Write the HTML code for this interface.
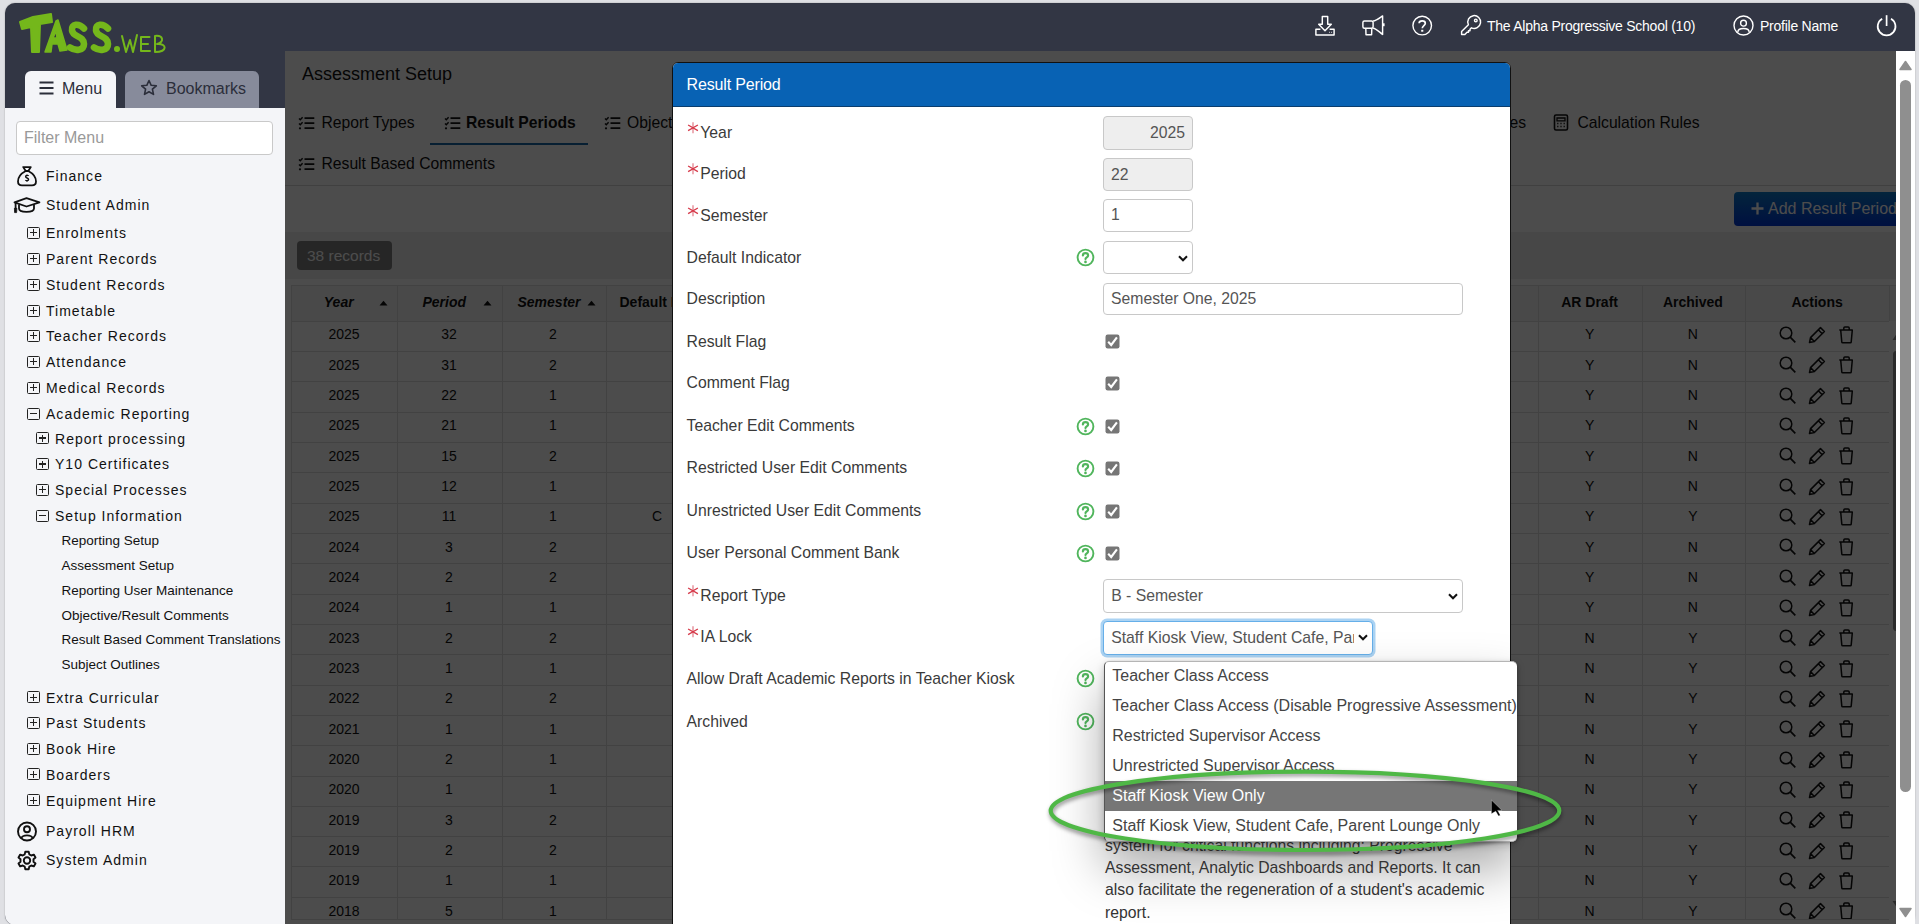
<!DOCTYPE html>
<html><head><meta charset="utf-8">
<style>
*{box-sizing:border-box;margin:0;padding:0}
html,body{width:1919px;height:924px;overflow:hidden;background:#dfe0e4;font-family:"Liberation Sans",sans-serif;position:relative}
.a{position:absolute}
.t{position:absolute;white-space:nowrap;line-height:1}
#app{position:absolute;left:5px;top:3px;width:1910px;height:922px;border-radius:10px;overflow:hidden;background:#323644;box-shadow:0 0 1.5px rgba(0,0,0,.35)}
#side{position:absolute;left:5px;top:108px;width:280px;height:816.5px;background:#f4f5f8;border-bottom-left-radius:10px}
.mi{position:absolute;white-space:nowrap;line-height:1;font-size:14px;letter-spacing:1.02px;color:#111}
.si{position:absolute;white-space:nowrap;line-height:1;font-size:13.5px;color:#111}
.bx{position:absolute;width:13px;height:12px;border:1.3px solid #222;border-radius:1.5px}
.bx:before{content:"";position:absolute;left:2px;right:2px;top:4.3px;height:1.3px;background:#222}
.bx.p:after{content:"";position:absolute;top:1.5px;bottom:1.5px;left:4.5px;width:1.3px;background:#222}
#main{position:absolute;left:285px;top:51px;width:1611px;height:880px;background:#fff;overflow:hidden}
#sb{position:absolute;left:1896px;top:51px;width:19px;height:880px;background:#fff}
.ov{position:absolute;left:0;top:0;width:1611px;height:880px;background:rgba(0,0,0,.7)}
.hd{color:#fff;font-size:14px;letter-spacing:-0.25px}
</style></head><body>
<div id="app"></div>

<!-- header logo -->
<svg class="a" style="left:0;top:0" width="200" height="60" viewBox="0 0 200 60">
 <g fill="#74b71b" stroke="#74b71b" stroke-linejoin="round" stroke-linecap="round">
  <path d="M20,22 L33,17 L51,14 L52,22 L40,24 L39,52 L32,52 L31,27 L22,29 Z" stroke-width="2"/>
  <path d="M45,52 L56,21 L58,20 L67,50 L60,51 L58,44 L52,44 L51,52 Z M53,38 L57,38 L56,31 Z" stroke-width="1.5" fill-rule="evenodd"/>
  <path d="M84,28.5 C79,23 71,23.5 72,30.5 C73,37.5 84,35.5 84,44 C84,51 75,51 70,47.5" fill="none" stroke-width="6.6"/>
  <path d="M108,28.5 C103,23 95,23.5 96,30.5 C97,37.5 108,35.5 108,44 C108,51 99,51 94,47.5" fill="none" stroke-width="6.6"/>
  <circle cx="117" cy="49" r="3" stroke="none"/>
  <path d="M122,36 L126,52 L130,40 L133,52 L137,35" fill="none" stroke-width="2"/>
  <path d="M149.5,37 L141,37 L141,51 L150,51 M141,44 L148,44" fill="none" stroke-width="2"/>
  <path d="M155,52 L155,36 C163,35 165,42 157,44 C167,43 168,52 155,52 Z" fill="none" stroke-width="2"/>
 </g>
</svg>

<!-- header right -->
<svg class="a" style="left:1313px;top:15px" width="24" height="22" viewBox="0 0 24 22" fill="none" stroke="#fff" stroke-width="1.45" stroke-linejoin="round">
 <path d="M9.3,1.4 H14.7 V9.3 H18.3 L12,15.7 L5.7,9.3 H9.3 Z"/>
 <path d="M7.4,14.2 H2.9 V20 H21.1 V14.2 H16.6"/>
 <path d="M16,17.4 h0.6 M18.2,17.4 h0.6" stroke-width="1.4"/>
</svg>
<svg class="a" style="left:1360px;top:15px" width="28" height="22" viewBox="0 0 28 22" fill="none" stroke="#fff" stroke-width="1.45" stroke-linejoin="round">
 <rect x="2.9" y="6" width="10.2" height="7.3" rx="1.5"/>
 <path d="M13.1,6 C16.5,5.6 19.5,3 22.6,0.9 V19.4 C19.5,17.3 16.5,13.7 13.1,13.3"/>
 <path d="M5.8,13.3 L6,19.8 H11.6 L11.8,13.3"/>
 <path d="M23.6,8.3 V11.2" stroke-width="2"/>
</svg>
<svg class="a" style="left:1411px;top:15px" width="22" height="22" viewBox="0 0 22 22" fill="none" stroke="#fff" stroke-width="1.4">
 <circle cx="11.2" cy="10.6" r="9.3"/>
 <path d="M8.1,8.3 C8.1,5.1 14.3,5.1 14.3,8.3 C14.3,10.5 11.3,10.7 11.3,13.3" stroke-width="1.7"/>
 <rect x="10.2" y="14.8" width="2.1" height="1.9" fill="#fff" stroke="none"/>
</svg>
<svg class="a" style="left:1459px;top:14px" width="24" height="23" viewBox="0 0 24 23" fill="none" stroke="#fff" stroke-width="1.45" stroke-linejoin="round">
 <path d="M9.4,10.7 A6.4,6.4 0 1 1 12.5,13.8 L11,15.3 V16.8 H9.5 V18.3 H8 L5.9,20.4 H2.6 V17.5 Z"/>
 <circle cx="16.8" cy="6.4" r="1.3"/>
</svg>
<div class="t hd" style="left:1487px;top:19px">The Alpha Progressive School (10)</div>
<svg class="a" style="left:1733px;top:15px" width="22" height="22" viewBox="0 0 22 22" fill="none" stroke="#fff" stroke-width="1.4">
 <circle cx="10.5" cy="10.5" r="9.5"/>
 <circle cx="10.5" cy="8.2" r="2.9"/>
 <path d="M4.8,17.2 C4.8,12.2 16.2,12.2 16.2,17.2"/>
</svg>
<div class="t hd" style="left:1760px;top:19px">Profile Name</div>
<svg class="a" style="left:1876px;top:14px" width="22" height="23" viewBox="0 0 22 23" fill="none" stroke="#fff" stroke-width="1.7">
 <path d="M10.6,1.2 V12"/>
 <path d="M6.2,4.7 A8.9,8.9 0 1 0 15,4.7"/>
</svg>

<!-- tabs -->
<div class="a" style="left:25px;top:71px;width:91px;height:40px;background:#f4f5f8;border-radius:6px 6px 0 0"></div>
<div class="a" style="left:125px;top:71px;width:134px;height:38.5px;background:#878b9b;border-radius:6px 6px 0 0"></div>
<svg class="a" style="left:39px;top:81px" width="16" height="14" viewBox="0 0 16 14"><path d="M0.5,1.5 H14.5 M0.5,7 H14.5 M0.5,12.5 H14.5" stroke="#2b2e3a" stroke-width="2"/></svg>
<div class="t" style="left:62px;top:81px;font-size:16px;color:#2b2e3a">Menu</div>
<svg class="a" style="left:140px;top:79px" width="18" height="18" viewBox="0 0 18 18"><path d="M9,1.5 L11.2,6.3 L16.3,6.8 L12.4,10.2 L13.5,15.4 L9,12.8 L4.5,15.4 L5.6,10.2 L1.7,6.8 L6.8,6.3 Z" fill="none" stroke="#2b2e3a" stroke-width="1.6" stroke-linejoin="round"/></svg>
<div class="t" style="left:166px;top:81px;font-size:16px;color:#2b2e3a">Bookmarks</div>

<!-- sidebar -->
<div id="side"></div>
<div class="a" style="left:16px;top:121px;width:257px;height:34px;background:#fff;border:1px solid #c9c9c9;border-radius:4px"></div>
<div class="t" style="left:24.0px;top:130.46px;font-size:16px;color:#999">Filter Menu</div>
<div class="mi" style="left:46px;top:169.15px">Finance</div>
<div class="mi" style="left:46px;top:198.15px">Student Admin</div>
<div class="mi" style="left:46px;top:226.15px">Enrolments</div>
<div class="bx p" style="left:27px;top:226.7px"></div>
<div class="mi" style="left:46px;top:252.15px">Parent Records</div>
<div class="bx p" style="left:27px;top:252.7px"></div>
<div class="mi" style="left:46px;top:278.15px">Student Records</div>
<div class="bx p" style="left:27px;top:278.7px"></div>
<div class="mi" style="left:46px;top:303.95px">Timetable</div>
<div class="bx p" style="left:27px;top:304.5px"></div>
<div class="mi" style="left:46px;top:329.15px">Teacher Records</div>
<div class="bx p" style="left:27px;top:329.7px"></div>
<div class="mi" style="left:46px;top:355.15px">Attendance</div>
<div class="bx p" style="left:27px;top:355.7px"></div>
<div class="mi" style="left:46px;top:381.15px">Medical Records</div>
<div class="bx p" style="left:27px;top:381.7px"></div>
<div class="mi" style="left:46px;top:407.15px">Academic Reporting</div>
<div class="bx " style="left:27px;top:407.7px"></div>
<div class="mi" style="left:55px;top:431.65px">Report processing</div>
<div class="bx p" style="left:36px;top:432.2px"></div>
<div class="mi" style="left:55px;top:457.45px">Y10 Certificates</div>
<div class="bx p" style="left:36px;top:458.0px"></div>
<div class="mi" style="left:55px;top:483.35px">Special Processes</div>
<div class="bx p" style="left:36px;top:483.9px"></div>
<div class="mi" style="left:55px;top:509.25px">Setup Information</div>
<div class="bx " style="left:36px;top:509.8px"></div>
<div class="mi" style="left:46px;top:690.85px">Extra Curricular</div>
<div class="bx p" style="left:27px;top:691.4px"></div>
<div class="mi" style="left:46px;top:716.25px">Past Students</div>
<div class="bx p" style="left:27px;top:716.8px"></div>
<div class="mi" style="left:46px;top:742.15px">Book Hire</div>
<div class="bx p" style="left:27px;top:742.7px"></div>
<div class="mi" style="left:46px;top:767.75px">Boarders</div>
<div class="bx p" style="left:27px;top:768.3px"></div>
<div class="mi" style="left:46px;top:793.75px">Equipment Hire</div>
<div class="bx p" style="left:27px;top:794.3px"></div>
<div class="mi" style="left:46px;top:824.15px">Payroll HRM</div>
<div class="mi" style="left:46px;top:853.35px">System Admin</div>
<div class="si" style="left:61.5px;top:534.47px">Reporting Setup</div>
<div class="si" style="left:61.5px;top:559.17px">Assessment Setup</div>
<div class="si" style="left:61.5px;top:584.27px">Reporting User Maintenance</div>
<div class="si" style="left:61.5px;top:608.97px">Objective/Result Comments</div>
<div class="si" style="left:61.5px;top:633.37px">Result Based Comment Translations</div>
<div class="si" style="left:61.5px;top:658.17px">Subject Outlines</div>
<svg class="a" style="left:15px;top:164px" width="24" height="24" viewBox="0 0 24 24" fill="none" stroke="#111" stroke-width="1.8" stroke-linejoin="round">
 <path d="M8.2,3.1 H15.8 L13.3,7 H10.7 Z"/>
 <path d="M10.7,7 C5,10 3,14.5 3,17.5 C3,20 4.5,21.3 7,21.3 H17 C19.5,21.3 21,20 21,17.5 C21,14.5 19,10 13.3,7"/>
 <path d="M13.6,11.9 C13.1,11.2 10.6,11.1 10.6,12.7 C10.6,14.2 13.6,13.8 13.6,15.4 C13.6,16.9 11,16.9 10.4,16.1 M12,10.6 V11.4 M12,16.9 V17.8" stroke-width="1.4"/>
</svg>
<svg class="a" style="left:13px;top:195px" width="28" height="20" viewBox="0 0 28 20" fill="none" stroke="#111" stroke-width="1.8" stroke-linejoin="round">
 <path d="M13.5,3.2 L26.5,7.3 L13.5,11.5 L1.5,7.3 Z"/>
 <path d="M6,9.4 V13.5 C6,18 21,18 21,13.5 V9.4"/>
 <path d="M2.6,7.6 V14"/>
 <path d="M1.4,13.3 L3.9,13.3 L3.6,17.6 H1.6 Z" fill="#111" stroke-width="0.8"/>
</svg>
<svg class="a" style="left:16px;top:821px" width="22" height="22" viewBox="0 0 22 22" fill="none" stroke="#111" stroke-width="1.9">
 <circle cx="11" cy="10.5" r="9"/>
 <circle cx="11" cy="8.3" r="3"/>
 <path d="M5.3,17.2 C6.5,13.4 15.5,13.4 16.7,17.2"/>
</svg>
<svg class="a" style="left:16px;top:850px" width="22" height="22" viewBox="0 0 22 22" fill="none" stroke="#111" stroke-width="1.9" stroke-linejoin="round">
 <path d="M9.3,1.8 H12.7 L13.3,4.4 L15.3,5.5 L17.8,4.6 L19.5,7.5 L17.5,9.3 V11.7 L19.5,13.5 L17.8,16.4 L15.3,15.5 L13.3,16.6 L12.7,19.2 H9.3 L8.7,16.6 L6.7,15.5 L4.2,16.4 L2.5,13.5 L4.5,11.7 V9.3 L2.5,7.5 L4.2,4.6 L6.7,5.5 L8.7,4.4 Z"/>
 <circle cx="11" cy="10.5" r="3.2"/>
</svg>
<div id="main">
<div class="t" style="left:17.0px;top:13.76px;font-size:18px;color:#111">Assessment Setup</div>
<svg class="a" style="left:13px;top:65px" width="17" height="14" viewBox="0 0 17 14" fill="none" stroke="#111" stroke-width="1.7">
<path d="M1,2.5 L2.3,3.8 L4.6,1.2 M1,7.5 L2.3,8.8 L4.6,6.2" stroke-width="1.4"/><circle cx="2" cy="12.3" r="1.1" fill="#111" stroke="none"/>
<path d="M6.5,2.2 H16.3 M6.5,7.2 H16.3 M6.5,12.2 H16.3"/></svg>
<div class="t" style="left:36.5px;top:64.11px;font-size:15.7px;color:#111">Report Types</div>
<svg class="a" style="left:158.5px;top:65px" width="17" height="14" viewBox="0 0 17 14" fill="none" stroke="#111" stroke-width="1.7">
<path d="M1,2.5 L2.3,3.8 L4.6,1.2 M1,7.5 L2.3,8.8 L4.6,6.2" stroke-width="1.4"/><circle cx="2" cy="12.3" r="1.1" fill="#111" stroke="none"/>
<path d="M6.5,2.2 H16.3 M6.5,7.2 H16.3 M6.5,12.2 H16.3"/></svg>
<div class="t" style="left:181.0px;top:64.11px;font-size:15.7px;color:#111;font-weight:bold">Result Periods</div>
<div class="a" style="left:145.0px;top:91.5px;width:158.0px;height:2.5px;background:#1a6aa8"></div>
<svg class="a" style="left:319px;top:65px" width="17" height="14" viewBox="0 0 17 14" fill="none" stroke="#111" stroke-width="1.7">
<path d="M1,2.5 L2.3,3.8 L4.6,1.2 M1,7.5 L2.3,8.8 L4.6,6.2" stroke-width="1.4"/><circle cx="2" cy="12.3" r="1.1" fill="#111" stroke="none"/>
<path d="M6.5,2.2 H16.3 M6.5,7.2 H16.3 M6.5,12.2 H16.3"/></svg>
<div class="t" style="left:342.0px;top:64.11px;font-size:15.7px;color:#111">Objective/Result Comment Templates</div>
<svg class="a" style="left:13px;top:106px" width="17" height="14" viewBox="0 0 17 14" fill="none" stroke="#111" stroke-width="1.7">
<path d="M1,2.5 L2.3,3.8 L4.6,1.2 M1,7.5 L2.3,8.8 L4.6,6.2" stroke-width="1.4"/><circle cx="2" cy="12.3" r="1.1" fill="#111" stroke="none"/>
<path d="M6.5,2.2 H16.3 M6.5,7.2 H16.3 M6.5,12.2 H16.3"/></svg>
<div class="t" style="left:36.5px;top:105.41px;font-size:15.7px;color:#111">Result Based Comments</div>
<div class="t" style="left:1040px;width:201px;text-align:right;top:64.11px;font-size:15.7px;color:#111">Comment Templates</div>
<svg class="a" style="left:1268px;top:63px" width="16" height="17" viewBox="0 0 16 17" fill="none" stroke="#111" stroke-width="1.6">
<rect x="1.5" y="1" width="13" height="15" rx="1.5"/><path d="M4,4 H12 V6.8 H4 Z" stroke-width="1.3"/>
<path d="M4.2,9.5 h1.2 M7.4,9.5 h1.2 M10.6,9.5 h1.2 M4.2,12.5 h1.2 M7.4,12.5 h1.2 M10.6,12.5 h1.2" stroke-width="1.5"/></svg>
<div class="t" style="left:1292.5px;top:64.11px;font-size:15.7px;color:#111">Calculation Rules</div>
<div class="a" style="left:0.0px;top:134.0px;width:1611.0px;height:1.0px;background:#d5d5d5"></div>
<div class="a" style="left:1449.0px;top:141.0px;width:200.0px;height:34.0px;border-radius:4px;background:linear-gradient(#0c7bc9,#0036d6)"></div>
<svg class="a" style="left:1465.5px;top:150.5px" width="13" height="13" viewBox="0 0 13 13"><path d="M6.5,0.5 V12.5 M0.5,6.5 H12.5" stroke="#fff" stroke-width="2.3"/></svg>
<div class="t" style="left:1483.0px;top:149.66px;font-size:16px;color:#fff">Add Result Period</div>
<div class="a" style="left:0.0px;top:181.0px;width:1611.0px;height:46.5px;background:#ededed"></div>
<div class="a" style="left:12.0px;top:190.0px;width:95.0px;height:28.5px;border-radius:4px;background:#7f7f7f"></div>
<div class="t" style="left:22.0px;top:196.68px;font-size:15.5px;color:#fff">38 records</div>
<div class="a" style="left:6.4px;top:234.0px;width:1604.6px;height:35.5px;background:#f6f6f6"></div>
<div class="a" style="left:6.4px;top:234.0px;width:1.0px;height:642.1px;background:#dedede"></div>
<div class="a" style="left:111.5px;top:234.0px;width:1.0px;height:642.1px;background:#dedede"></div>
<div class="a" style="left:216.6px;top:234.0px;width:1.0px;height:642.1px;background:#dedede"></div>
<div class="a" style="left:320.5px;top:234.0px;width:1.0px;height:642.1px;background:#dedede"></div>
<div class="a" style="left:424.5px;top:234.0px;width:1.0px;height:642.1px;background:#dedede"></div>
<div class="a" style="left:528.0px;top:234.0px;width:1.0px;height:642.1px;background:#dedede"></div>
<div class="a" style="left:632.0px;top:234.0px;width:1.0px;height:642.1px;background:#dedede"></div>
<div class="a" style="left:736.0px;top:234.0px;width:1.0px;height:642.1px;background:#dedede"></div>
<div class="a" style="left:840.0px;top:234.0px;width:1.0px;height:642.1px;background:#dedede"></div>
<div class="a" style="left:944.0px;top:234.0px;width:1.0px;height:642.1px;background:#dedede"></div>
<div class="a" style="left:1048.0px;top:234.0px;width:1.0px;height:642.1px;background:#dedede"></div>
<div class="a" style="left:1152.0px;top:234.0px;width:1.0px;height:642.1px;background:#dedede"></div>
<div class="a" style="left:1252.9px;top:234.0px;width:1.0px;height:642.1px;background:#dedede"></div>
<div class="a" style="left:1356.5px;top:234.0px;width:1.0px;height:642.1px;background:#dedede"></div>
<div class="a" style="left:1459.6px;top:234.0px;width:1.0px;height:642.1px;background:#dedede"></div>
<div class="a" style="left:1604.2px;top:234.0px;width:1.0px;height:35.5px;background:#dedede"></div>
<div class="a" style="left:6.4px;top:234.0px;width:1604.6px;height:1.0px;background:#dedede"></div>
<div class="a" style="left:6.4px;top:269.5px;width:1597.8px;height:1.0px;background:#dedede"></div>
<div class="a" style="left:6.4px;top:299.8px;width:1597.8px;height:1.0px;background:#dedede"></div>
<div class="a" style="left:6.4px;top:330.2px;width:1597.8px;height:1.0px;background:#dedede"></div>
<div class="a" style="left:6.4px;top:360.5px;width:1597.8px;height:1.0px;background:#dedede"></div>
<div class="a" style="left:6.4px;top:390.8px;width:1597.8px;height:1.0px;background:#dedede"></div>
<div class="a" style="left:6.4px;top:421.1px;width:1597.8px;height:1.0px;background:#dedede"></div>
<div class="a" style="left:6.4px;top:451.5px;width:1597.8px;height:1.0px;background:#dedede"></div>
<div class="a" style="left:6.4px;top:481.8px;width:1597.8px;height:1.0px;background:#dedede"></div>
<div class="a" style="left:6.4px;top:512.1px;width:1597.8px;height:1.0px;background:#dedede"></div>
<div class="a" style="left:6.4px;top:542.5px;width:1597.8px;height:1.0px;background:#dedede"></div>
<div class="a" style="left:6.4px;top:572.8px;width:1597.8px;height:1.0px;background:#dedede"></div>
<div class="a" style="left:6.4px;top:603.1px;width:1597.8px;height:1.0px;background:#dedede"></div>
<div class="a" style="left:6.4px;top:633.5px;width:1597.8px;height:1.0px;background:#dedede"></div>
<div class="a" style="left:6.4px;top:663.8px;width:1597.8px;height:1.0px;background:#dedede"></div>
<div class="a" style="left:6.4px;top:694.1px;width:1597.8px;height:1.0px;background:#dedede"></div>
<div class="a" style="left:6.4px;top:724.5px;width:1597.8px;height:1.0px;background:#dedede"></div>
<div class="a" style="left:6.4px;top:754.8px;width:1597.8px;height:1.0px;background:#dedede"></div>
<div class="a" style="left:6.4px;top:785.1px;width:1597.8px;height:1.0px;background:#dedede"></div>
<div class="a" style="left:6.4px;top:815.4px;width:1597.8px;height:1.0px;background:#dedede"></div>
<div class="a" style="left:6.4px;top:845.8px;width:1597.8px;height:1.0px;background:#dedede"></div>
<div class="a" style="left:6.4px;top:876.1px;width:1597.8px;height:1.0px;background:#dedede"></div>
<div class="t" style="left:38.8px;top:244.45px;font-size:14px;color:#111;font-weight:bold;font-style:italic">Year</div>
<div class="t" style="left:137.5px;top:244.45px;font-size:14px;color:#111;font-weight:bold;font-style:italic">Period</div>
<div class="t" style="left:232.5px;top:244.45px;font-size:14px;color:#111;font-weight:bold;font-style:italic">Semester</div>
<div class="t" style="left:334.5px;top:244.45px;font-size:14px;color:#111;font-weight:bold">Default Indicator</div>
<svg class="a" style="left:93.5px;top:249px" width="9" height="6" viewBox="0 0 9 6"><path d="M0.5,5.5 L4.5,0.8 L8.5,5.5 Z" fill="#111"/></svg>
<svg class="a" style="left:198.39999999999998px;top:249px" width="9" height="6" viewBox="0 0 9 6"><path d="M0.5,5.5 L4.5,0.8 L8.5,5.5 Z" fill="#111"/></svg>
<svg class="a" style="left:302px;top:249px" width="9" height="6" viewBox="0 0 9 6"><path d="M0.5,5.5 L4.5,0.8 L8.5,5.5 Z" fill="#111"/></svg>
<div class="t" style="left:1204.6px;width:200px;text-align:center;top:244.45px;font-size:14px;color:#111;font-weight:bold">AR Draft</div>
<div class="t" style="left:1307.9px;width:200px;text-align:center;top:244.45px;font-size:14px;color:#111;font-weight:bold">Archived</div>
<div class="t" style="left:1432.1px;width:200px;text-align:center;top:244.45px;font-size:14px;color:#111;font-weight:bold">Actions</div>
<div class="t" style="left:-41.0px;width:200px;text-align:center;top:276.35px;font-size:14px;color:#111">2025</div>
<div class="t" style="left:64.0px;width:200px;text-align:center;top:276.35px;font-size:14px;color:#111">32</div>
<div class="t" style="left:168.0px;width:200px;text-align:center;top:276.35px;font-size:14px;color:#111">2</div>
<div class="t" style="left:1204.6px;width:200px;text-align:center;top:276.35px;font-size:14px;color:#111">Y</div>
<div class="t" style="left:1307.9px;width:200px;text-align:center;top:276.35px;font-size:14px;color:#111">N</div>
<svg class="a" style="left:1494.0px;top:275.0px" width="80" height="18" viewBox="0 0 80 18" fill="none" stroke="#111" stroke-width="1.5">
<circle cx="7" cy="7" r="5.8"/><path d="M11.2,11.2 L16.3,16.3" stroke-width="1.7"/>
<path d="M30.5,16.5 L31.5,11.6 L41.5,1.6 L45.4,5.5 L35.4,15.5 Z M39.3,3.8 L43.2,7.7 M31.5,11.6 L35.4,15.5" stroke-linejoin="round"/>
<path d="M60.3,4 H73.8 M61.7,4 L62.8,16.1 Q62.9,16.8 63.6,16.8 H71.4 Q72.1,16.8 72.2,16.1 L73.3,4 M64.8,4 V2.1 Q64.8,1 65.9,1 H69.1 Q70.2,1 70.2,2.1 V4" stroke-linejoin="round"/>
</svg>
<div class="t" style="left:-41.0px;width:200px;text-align:center;top:306.68px;font-size:14px;color:#111">2025</div>
<div class="t" style="left:64.0px;width:200px;text-align:center;top:306.68px;font-size:14px;color:#111">31</div>
<div class="t" style="left:168.0px;width:200px;text-align:center;top:306.68px;font-size:14px;color:#111">2</div>
<div class="t" style="left:1204.6px;width:200px;text-align:center;top:306.68px;font-size:14px;color:#111">Y</div>
<div class="t" style="left:1307.9px;width:200px;text-align:center;top:306.68px;font-size:14px;color:#111">N</div>
<svg class="a" style="left:1494.0px;top:305.3px" width="80" height="18" viewBox="0 0 80 18" fill="none" stroke="#111" stroke-width="1.5">
<circle cx="7" cy="7" r="5.8"/><path d="M11.2,11.2 L16.3,16.3" stroke-width="1.7"/>
<path d="M30.5,16.5 L31.5,11.6 L41.5,1.6 L45.4,5.5 L35.4,15.5 Z M39.3,3.8 L43.2,7.7 M31.5,11.6 L35.4,15.5" stroke-linejoin="round"/>
<path d="M60.3,4 H73.8 M61.7,4 L62.8,16.1 Q62.9,16.8 63.6,16.8 H71.4 Q72.1,16.8 72.2,16.1 L73.3,4 M64.8,4 V2.1 Q64.8,1 65.9,1 H69.1 Q70.2,1 70.2,2.1 V4" stroke-linejoin="round"/>
</svg>
<div class="t" style="left:-41.0px;width:200px;text-align:center;top:337.01px;font-size:14px;color:#111">2025</div>
<div class="t" style="left:64.0px;width:200px;text-align:center;top:337.01px;font-size:14px;color:#111">22</div>
<div class="t" style="left:168.0px;width:200px;text-align:center;top:337.01px;font-size:14px;color:#111">1</div>
<div class="t" style="left:1204.6px;width:200px;text-align:center;top:337.01px;font-size:14px;color:#111">Y</div>
<div class="t" style="left:1307.9px;width:200px;text-align:center;top:337.01px;font-size:14px;color:#111">N</div>
<svg class="a" style="left:1494.0px;top:335.7px" width="80" height="18" viewBox="0 0 80 18" fill="none" stroke="#111" stroke-width="1.5">
<circle cx="7" cy="7" r="5.8"/><path d="M11.2,11.2 L16.3,16.3" stroke-width="1.7"/>
<path d="M30.5,16.5 L31.5,11.6 L41.5,1.6 L45.4,5.5 L35.4,15.5 Z M39.3,3.8 L43.2,7.7 M31.5,11.6 L35.4,15.5" stroke-linejoin="round"/>
<path d="M60.3,4 H73.8 M61.7,4 L62.8,16.1 Q62.9,16.8 63.6,16.8 H71.4 Q72.1,16.8 72.2,16.1 L73.3,4 M64.8,4 V2.1 Q64.8,1 65.9,1 H69.1 Q70.2,1 70.2,2.1 V4" stroke-linejoin="round"/>
</svg>
<div class="t" style="left:-41.0px;width:200px;text-align:center;top:367.34px;font-size:14px;color:#111">2025</div>
<div class="t" style="left:64.0px;width:200px;text-align:center;top:367.34px;font-size:14px;color:#111">21</div>
<div class="t" style="left:168.0px;width:200px;text-align:center;top:367.34px;font-size:14px;color:#111">1</div>
<div class="t" style="left:1204.6px;width:200px;text-align:center;top:367.34px;font-size:14px;color:#111">Y</div>
<div class="t" style="left:1307.9px;width:200px;text-align:center;top:367.34px;font-size:14px;color:#111">N</div>
<svg class="a" style="left:1494.0px;top:366.0px" width="80" height="18" viewBox="0 0 80 18" fill="none" stroke="#111" stroke-width="1.5">
<circle cx="7" cy="7" r="5.8"/><path d="M11.2,11.2 L16.3,16.3" stroke-width="1.7"/>
<path d="M30.5,16.5 L31.5,11.6 L41.5,1.6 L45.4,5.5 L35.4,15.5 Z M39.3,3.8 L43.2,7.7 M31.5,11.6 L35.4,15.5" stroke-linejoin="round"/>
<path d="M60.3,4 H73.8 M61.7,4 L62.8,16.1 Q62.9,16.8 63.6,16.8 H71.4 Q72.1,16.8 72.2,16.1 L73.3,4 M64.8,4 V2.1 Q64.8,1 65.9,1 H69.1 Q70.2,1 70.2,2.1 V4" stroke-linejoin="round"/>
</svg>
<div class="t" style="left:-41.0px;width:200px;text-align:center;top:397.67px;font-size:14px;color:#111">2025</div>
<div class="t" style="left:64.0px;width:200px;text-align:center;top:397.67px;font-size:14px;color:#111">15</div>
<div class="t" style="left:168.0px;width:200px;text-align:center;top:397.67px;font-size:14px;color:#111">2</div>
<div class="t" style="left:1204.6px;width:200px;text-align:center;top:397.67px;font-size:14px;color:#111">Y</div>
<div class="t" style="left:1307.9px;width:200px;text-align:center;top:397.67px;font-size:14px;color:#111">N</div>
<svg class="a" style="left:1494.0px;top:396.3px" width="80" height="18" viewBox="0 0 80 18" fill="none" stroke="#111" stroke-width="1.5">
<circle cx="7" cy="7" r="5.8"/><path d="M11.2,11.2 L16.3,16.3" stroke-width="1.7"/>
<path d="M30.5,16.5 L31.5,11.6 L41.5,1.6 L45.4,5.5 L35.4,15.5 Z M39.3,3.8 L43.2,7.7 M31.5,11.6 L35.4,15.5" stroke-linejoin="round"/>
<path d="M60.3,4 H73.8 M61.7,4 L62.8,16.1 Q62.9,16.8 63.6,16.8 H71.4 Q72.1,16.8 72.2,16.1 L73.3,4 M64.8,4 V2.1 Q64.8,1 65.9,1 H69.1 Q70.2,1 70.2,2.1 V4" stroke-linejoin="round"/>
</svg>
<div class="t" style="left:-41.0px;width:200px;text-align:center;top:428.00px;font-size:14px;color:#111">2025</div>
<div class="t" style="left:64.0px;width:200px;text-align:center;top:428.00px;font-size:14px;color:#111">12</div>
<div class="t" style="left:168.0px;width:200px;text-align:center;top:428.00px;font-size:14px;color:#111">1</div>
<div class="t" style="left:1204.6px;width:200px;text-align:center;top:428.00px;font-size:14px;color:#111">Y</div>
<div class="t" style="left:1307.9px;width:200px;text-align:center;top:428.00px;font-size:14px;color:#111">N</div>
<svg class="a" style="left:1494.0px;top:426.6px" width="80" height="18" viewBox="0 0 80 18" fill="none" stroke="#111" stroke-width="1.5">
<circle cx="7" cy="7" r="5.8"/><path d="M11.2,11.2 L16.3,16.3" stroke-width="1.7"/>
<path d="M30.5,16.5 L31.5,11.6 L41.5,1.6 L45.4,5.5 L35.4,15.5 Z M39.3,3.8 L43.2,7.7 M31.5,11.6 L35.4,15.5" stroke-linejoin="round"/>
<path d="M60.3,4 H73.8 M61.7,4 L62.8,16.1 Q62.9,16.8 63.6,16.8 H71.4 Q72.1,16.8 72.2,16.1 L73.3,4 M64.8,4 V2.1 Q64.8,1 65.9,1 H69.1 Q70.2,1 70.2,2.1 V4" stroke-linejoin="round"/>
</svg>
<div class="t" style="left:-41.0px;width:200px;text-align:center;top:458.33px;font-size:14px;color:#111">2025</div>
<div class="t" style="left:64.0px;width:200px;text-align:center;top:458.33px;font-size:14px;color:#111">11</div>
<div class="t" style="left:168.0px;width:200px;text-align:center;top:458.33px;font-size:14px;color:#111">1</div>
<div class="t" style="left:272.0px;width:200px;text-align:center;top:458.33px;font-size:14px;color:#111">C</div>
<div class="t" style="left:1204.6px;width:200px;text-align:center;top:458.33px;font-size:14px;color:#111">Y</div>
<div class="t" style="left:1307.9px;width:200px;text-align:center;top:458.33px;font-size:14px;color:#111">Y</div>
<svg class="a" style="left:1494.0px;top:457.0px" width="80" height="18" viewBox="0 0 80 18" fill="none" stroke="#111" stroke-width="1.5">
<circle cx="7" cy="7" r="5.8"/><path d="M11.2,11.2 L16.3,16.3" stroke-width="1.7"/>
<path d="M30.5,16.5 L31.5,11.6 L41.5,1.6 L45.4,5.5 L35.4,15.5 Z M39.3,3.8 L43.2,7.7 M31.5,11.6 L35.4,15.5" stroke-linejoin="round"/>
<path d="M60.3,4 H73.8 M61.7,4 L62.8,16.1 Q62.9,16.8 63.6,16.8 H71.4 Q72.1,16.8 72.2,16.1 L73.3,4 M64.8,4 V2.1 Q64.8,1 65.9,1 H69.1 Q70.2,1 70.2,2.1 V4" stroke-linejoin="round"/>
</svg>
<div class="t" style="left:-41.0px;width:200px;text-align:center;top:488.66px;font-size:14px;color:#111">2024</div>
<div class="t" style="left:64.0px;width:200px;text-align:center;top:488.66px;font-size:14px;color:#111">3</div>
<div class="t" style="left:168.0px;width:200px;text-align:center;top:488.66px;font-size:14px;color:#111">2</div>
<div class="t" style="left:1204.6px;width:200px;text-align:center;top:488.66px;font-size:14px;color:#111">Y</div>
<div class="t" style="left:1307.9px;width:200px;text-align:center;top:488.66px;font-size:14px;color:#111">N</div>
<svg class="a" style="left:1494.0px;top:487.3px" width="80" height="18" viewBox="0 0 80 18" fill="none" stroke="#111" stroke-width="1.5">
<circle cx="7" cy="7" r="5.8"/><path d="M11.2,11.2 L16.3,16.3" stroke-width="1.7"/>
<path d="M30.5,16.5 L31.5,11.6 L41.5,1.6 L45.4,5.5 L35.4,15.5 Z M39.3,3.8 L43.2,7.7 M31.5,11.6 L35.4,15.5" stroke-linejoin="round"/>
<path d="M60.3,4 H73.8 M61.7,4 L62.8,16.1 Q62.9,16.8 63.6,16.8 H71.4 Q72.1,16.8 72.2,16.1 L73.3,4 M64.8,4 V2.1 Q64.8,1 65.9,1 H69.1 Q70.2,1 70.2,2.1 V4" stroke-linejoin="round"/>
</svg>
<div class="t" style="left:-41.0px;width:200px;text-align:center;top:518.99px;font-size:14px;color:#111">2024</div>
<div class="t" style="left:64.0px;width:200px;text-align:center;top:518.99px;font-size:14px;color:#111">2</div>
<div class="t" style="left:168.0px;width:200px;text-align:center;top:518.99px;font-size:14px;color:#111">2</div>
<div class="t" style="left:1204.6px;width:200px;text-align:center;top:518.99px;font-size:14px;color:#111">Y</div>
<div class="t" style="left:1307.9px;width:200px;text-align:center;top:518.99px;font-size:14px;color:#111">N</div>
<svg class="a" style="left:1494.0px;top:517.6px" width="80" height="18" viewBox="0 0 80 18" fill="none" stroke="#111" stroke-width="1.5">
<circle cx="7" cy="7" r="5.8"/><path d="M11.2,11.2 L16.3,16.3" stroke-width="1.7"/>
<path d="M30.5,16.5 L31.5,11.6 L41.5,1.6 L45.4,5.5 L35.4,15.5 Z M39.3,3.8 L43.2,7.7 M31.5,11.6 L35.4,15.5" stroke-linejoin="round"/>
<path d="M60.3,4 H73.8 M61.7,4 L62.8,16.1 Q62.9,16.8 63.6,16.8 H71.4 Q72.1,16.8 72.2,16.1 L73.3,4 M64.8,4 V2.1 Q64.8,1 65.9,1 H69.1 Q70.2,1 70.2,2.1 V4" stroke-linejoin="round"/>
</svg>
<div class="t" style="left:-41.0px;width:200px;text-align:center;top:549.32px;font-size:14px;color:#111">2024</div>
<div class="t" style="left:64.0px;width:200px;text-align:center;top:549.32px;font-size:14px;color:#111">1</div>
<div class="t" style="left:168.0px;width:200px;text-align:center;top:549.32px;font-size:14px;color:#111">1</div>
<div class="t" style="left:1204.6px;width:200px;text-align:center;top:549.32px;font-size:14px;color:#111">Y</div>
<div class="t" style="left:1307.9px;width:200px;text-align:center;top:549.32px;font-size:14px;color:#111">N</div>
<svg class="a" style="left:1494.0px;top:548.0px" width="80" height="18" viewBox="0 0 80 18" fill="none" stroke="#111" stroke-width="1.5">
<circle cx="7" cy="7" r="5.8"/><path d="M11.2,11.2 L16.3,16.3" stroke-width="1.7"/>
<path d="M30.5,16.5 L31.5,11.6 L41.5,1.6 L45.4,5.5 L35.4,15.5 Z M39.3,3.8 L43.2,7.7 M31.5,11.6 L35.4,15.5" stroke-linejoin="round"/>
<path d="M60.3,4 H73.8 M61.7,4 L62.8,16.1 Q62.9,16.8 63.6,16.8 H71.4 Q72.1,16.8 72.2,16.1 L73.3,4 M64.8,4 V2.1 Q64.8,1 65.9,1 H69.1 Q70.2,1 70.2,2.1 V4" stroke-linejoin="round"/>
</svg>
<div class="t" style="left:-41.0px;width:200px;text-align:center;top:579.65px;font-size:14px;color:#111">2023</div>
<div class="t" style="left:64.0px;width:200px;text-align:center;top:579.65px;font-size:14px;color:#111">2</div>
<div class="t" style="left:168.0px;width:200px;text-align:center;top:579.65px;font-size:14px;color:#111">2</div>
<div class="t" style="left:1204.6px;width:200px;text-align:center;top:579.65px;font-size:14px;color:#111">N</div>
<div class="t" style="left:1307.9px;width:200px;text-align:center;top:579.65px;font-size:14px;color:#111">Y</div>
<svg class="a" style="left:1494.0px;top:578.3px" width="80" height="18" viewBox="0 0 80 18" fill="none" stroke="#111" stroke-width="1.5">
<circle cx="7" cy="7" r="5.8"/><path d="M11.2,11.2 L16.3,16.3" stroke-width="1.7"/>
<path d="M30.5,16.5 L31.5,11.6 L41.5,1.6 L45.4,5.5 L35.4,15.5 Z M39.3,3.8 L43.2,7.7 M31.5,11.6 L35.4,15.5" stroke-linejoin="round"/>
<path d="M60.3,4 H73.8 M61.7,4 L62.8,16.1 Q62.9,16.8 63.6,16.8 H71.4 Q72.1,16.8 72.2,16.1 L73.3,4 M64.8,4 V2.1 Q64.8,1 65.9,1 H69.1 Q70.2,1 70.2,2.1 V4" stroke-linejoin="round"/>
</svg>
<div class="t" style="left:-41.0px;width:200px;text-align:center;top:609.98px;font-size:14px;color:#111">2023</div>
<div class="t" style="left:64.0px;width:200px;text-align:center;top:609.98px;font-size:14px;color:#111">1</div>
<div class="t" style="left:168.0px;width:200px;text-align:center;top:609.98px;font-size:14px;color:#111">1</div>
<div class="t" style="left:1204.6px;width:200px;text-align:center;top:609.98px;font-size:14px;color:#111">N</div>
<div class="t" style="left:1307.9px;width:200px;text-align:center;top:609.98px;font-size:14px;color:#111">Y</div>
<svg class="a" style="left:1494.0px;top:608.6px" width="80" height="18" viewBox="0 0 80 18" fill="none" stroke="#111" stroke-width="1.5">
<circle cx="7" cy="7" r="5.8"/><path d="M11.2,11.2 L16.3,16.3" stroke-width="1.7"/>
<path d="M30.5,16.5 L31.5,11.6 L41.5,1.6 L45.4,5.5 L35.4,15.5 Z M39.3,3.8 L43.2,7.7 M31.5,11.6 L35.4,15.5" stroke-linejoin="round"/>
<path d="M60.3,4 H73.8 M61.7,4 L62.8,16.1 Q62.9,16.8 63.6,16.8 H71.4 Q72.1,16.8 72.2,16.1 L73.3,4 M64.8,4 V2.1 Q64.8,1 65.9,1 H69.1 Q70.2,1 70.2,2.1 V4" stroke-linejoin="round"/>
</svg>
<div class="t" style="left:-41.0px;width:200px;text-align:center;top:640.31px;font-size:14px;color:#111">2022</div>
<div class="t" style="left:64.0px;width:200px;text-align:center;top:640.31px;font-size:14px;color:#111">2</div>
<div class="t" style="left:168.0px;width:200px;text-align:center;top:640.31px;font-size:14px;color:#111">2</div>
<div class="t" style="left:1204.6px;width:200px;text-align:center;top:640.31px;font-size:14px;color:#111">N</div>
<div class="t" style="left:1307.9px;width:200px;text-align:center;top:640.31px;font-size:14px;color:#111">Y</div>
<svg class="a" style="left:1494.0px;top:639.0px" width="80" height="18" viewBox="0 0 80 18" fill="none" stroke="#111" stroke-width="1.5">
<circle cx="7" cy="7" r="5.8"/><path d="M11.2,11.2 L16.3,16.3" stroke-width="1.7"/>
<path d="M30.5,16.5 L31.5,11.6 L41.5,1.6 L45.4,5.5 L35.4,15.5 Z M39.3,3.8 L43.2,7.7 M31.5,11.6 L35.4,15.5" stroke-linejoin="round"/>
<path d="M60.3,4 H73.8 M61.7,4 L62.8,16.1 Q62.9,16.8 63.6,16.8 H71.4 Q72.1,16.8 72.2,16.1 L73.3,4 M64.8,4 V2.1 Q64.8,1 65.9,1 H69.1 Q70.2,1 70.2,2.1 V4" stroke-linejoin="round"/>
</svg>
<div class="t" style="left:-41.0px;width:200px;text-align:center;top:670.64px;font-size:14px;color:#111">2021</div>
<div class="t" style="left:64.0px;width:200px;text-align:center;top:670.64px;font-size:14px;color:#111">1</div>
<div class="t" style="left:168.0px;width:200px;text-align:center;top:670.64px;font-size:14px;color:#111">1</div>
<div class="t" style="left:1204.6px;width:200px;text-align:center;top:670.64px;font-size:14px;color:#111">N</div>
<div class="t" style="left:1307.9px;width:200px;text-align:center;top:670.64px;font-size:14px;color:#111">Y</div>
<svg class="a" style="left:1494.0px;top:669.3px" width="80" height="18" viewBox="0 0 80 18" fill="none" stroke="#111" stroke-width="1.5">
<circle cx="7" cy="7" r="5.8"/><path d="M11.2,11.2 L16.3,16.3" stroke-width="1.7"/>
<path d="M30.5,16.5 L31.5,11.6 L41.5,1.6 L45.4,5.5 L35.4,15.5 Z M39.3,3.8 L43.2,7.7 M31.5,11.6 L35.4,15.5" stroke-linejoin="round"/>
<path d="M60.3,4 H73.8 M61.7,4 L62.8,16.1 Q62.9,16.8 63.6,16.8 H71.4 Q72.1,16.8 72.2,16.1 L73.3,4 M64.8,4 V2.1 Q64.8,1 65.9,1 H69.1 Q70.2,1 70.2,2.1 V4" stroke-linejoin="round"/>
</svg>
<div class="t" style="left:-41.0px;width:200px;text-align:center;top:700.97px;font-size:14px;color:#111">2020</div>
<div class="t" style="left:64.0px;width:200px;text-align:center;top:700.97px;font-size:14px;color:#111">2</div>
<div class="t" style="left:168.0px;width:200px;text-align:center;top:700.97px;font-size:14px;color:#111">1</div>
<div class="t" style="left:1204.6px;width:200px;text-align:center;top:700.97px;font-size:14px;color:#111">N</div>
<div class="t" style="left:1307.9px;width:200px;text-align:center;top:700.97px;font-size:14px;color:#111">Y</div>
<svg class="a" style="left:1494.0px;top:699.6px" width="80" height="18" viewBox="0 0 80 18" fill="none" stroke="#111" stroke-width="1.5">
<circle cx="7" cy="7" r="5.8"/><path d="M11.2,11.2 L16.3,16.3" stroke-width="1.7"/>
<path d="M30.5,16.5 L31.5,11.6 L41.5,1.6 L45.4,5.5 L35.4,15.5 Z M39.3,3.8 L43.2,7.7 M31.5,11.6 L35.4,15.5" stroke-linejoin="round"/>
<path d="M60.3,4 H73.8 M61.7,4 L62.8,16.1 Q62.9,16.8 63.6,16.8 H71.4 Q72.1,16.8 72.2,16.1 L73.3,4 M64.8,4 V2.1 Q64.8,1 65.9,1 H69.1 Q70.2,1 70.2,2.1 V4" stroke-linejoin="round"/>
</svg>
<div class="t" style="left:-41.0px;width:200px;text-align:center;top:731.30px;font-size:14px;color:#111">2020</div>
<div class="t" style="left:64.0px;width:200px;text-align:center;top:731.30px;font-size:14px;color:#111">1</div>
<div class="t" style="left:168.0px;width:200px;text-align:center;top:731.30px;font-size:14px;color:#111">1</div>
<div class="t" style="left:1204.6px;width:200px;text-align:center;top:731.30px;font-size:14px;color:#111">N</div>
<div class="t" style="left:1307.9px;width:200px;text-align:center;top:731.30px;font-size:14px;color:#111">Y</div>
<svg class="a" style="left:1494.0px;top:730.0px" width="80" height="18" viewBox="0 0 80 18" fill="none" stroke="#111" stroke-width="1.5">
<circle cx="7" cy="7" r="5.8"/><path d="M11.2,11.2 L16.3,16.3" stroke-width="1.7"/>
<path d="M30.5,16.5 L31.5,11.6 L41.5,1.6 L45.4,5.5 L35.4,15.5 Z M39.3,3.8 L43.2,7.7 M31.5,11.6 L35.4,15.5" stroke-linejoin="round"/>
<path d="M60.3,4 H73.8 M61.7,4 L62.8,16.1 Q62.9,16.8 63.6,16.8 H71.4 Q72.1,16.8 72.2,16.1 L73.3,4 M64.8,4 V2.1 Q64.8,1 65.9,1 H69.1 Q70.2,1 70.2,2.1 V4" stroke-linejoin="round"/>
</svg>
<div class="t" style="left:-41.0px;width:200px;text-align:center;top:761.63px;font-size:14px;color:#111">2019</div>
<div class="t" style="left:64.0px;width:200px;text-align:center;top:761.63px;font-size:14px;color:#111">3</div>
<div class="t" style="left:168.0px;width:200px;text-align:center;top:761.63px;font-size:14px;color:#111">2</div>
<div class="t" style="left:1204.6px;width:200px;text-align:center;top:761.63px;font-size:14px;color:#111">N</div>
<div class="t" style="left:1307.9px;width:200px;text-align:center;top:761.63px;font-size:14px;color:#111">Y</div>
<svg class="a" style="left:1494.0px;top:760.3px" width="80" height="18" viewBox="0 0 80 18" fill="none" stroke="#111" stroke-width="1.5">
<circle cx="7" cy="7" r="5.8"/><path d="M11.2,11.2 L16.3,16.3" stroke-width="1.7"/>
<path d="M30.5,16.5 L31.5,11.6 L41.5,1.6 L45.4,5.5 L35.4,15.5 Z M39.3,3.8 L43.2,7.7 M31.5,11.6 L35.4,15.5" stroke-linejoin="round"/>
<path d="M60.3,4 H73.8 M61.7,4 L62.8,16.1 Q62.9,16.8 63.6,16.8 H71.4 Q72.1,16.8 72.2,16.1 L73.3,4 M64.8,4 V2.1 Q64.8,1 65.9,1 H69.1 Q70.2,1 70.2,2.1 V4" stroke-linejoin="round"/>
</svg>
<div class="t" style="left:-41.0px;width:200px;text-align:center;top:791.96px;font-size:14px;color:#111">2019</div>
<div class="t" style="left:64.0px;width:200px;text-align:center;top:791.96px;font-size:14px;color:#111">2</div>
<div class="t" style="left:168.0px;width:200px;text-align:center;top:791.96px;font-size:14px;color:#111">2</div>
<div class="t" style="left:1204.6px;width:200px;text-align:center;top:791.96px;font-size:14px;color:#111">N</div>
<div class="t" style="left:1307.9px;width:200px;text-align:center;top:791.96px;font-size:14px;color:#111">Y</div>
<svg class="a" style="left:1494.0px;top:790.6px" width="80" height="18" viewBox="0 0 80 18" fill="none" stroke="#111" stroke-width="1.5">
<circle cx="7" cy="7" r="5.8"/><path d="M11.2,11.2 L16.3,16.3" stroke-width="1.7"/>
<path d="M30.5,16.5 L31.5,11.6 L41.5,1.6 L45.4,5.5 L35.4,15.5 Z M39.3,3.8 L43.2,7.7 M31.5,11.6 L35.4,15.5" stroke-linejoin="round"/>
<path d="M60.3,4 H73.8 M61.7,4 L62.8,16.1 Q62.9,16.8 63.6,16.8 H71.4 Q72.1,16.8 72.2,16.1 L73.3,4 M64.8,4 V2.1 Q64.8,1 65.9,1 H69.1 Q70.2,1 70.2,2.1 V4" stroke-linejoin="round"/>
</svg>
<div class="t" style="left:-41.0px;width:200px;text-align:center;top:822.29px;font-size:14px;color:#111">2019</div>
<div class="t" style="left:64.0px;width:200px;text-align:center;top:822.29px;font-size:14px;color:#111">1</div>
<div class="t" style="left:168.0px;width:200px;text-align:center;top:822.29px;font-size:14px;color:#111">1</div>
<div class="t" style="left:1204.6px;width:200px;text-align:center;top:822.29px;font-size:14px;color:#111">N</div>
<div class="t" style="left:1307.9px;width:200px;text-align:center;top:822.29px;font-size:14px;color:#111">Y</div>
<svg class="a" style="left:1494.0px;top:820.9px" width="80" height="18" viewBox="0 0 80 18" fill="none" stroke="#111" stroke-width="1.5">
<circle cx="7" cy="7" r="5.8"/><path d="M11.2,11.2 L16.3,16.3" stroke-width="1.7"/>
<path d="M30.5,16.5 L31.5,11.6 L41.5,1.6 L45.4,5.5 L35.4,15.5 Z M39.3,3.8 L43.2,7.7 M31.5,11.6 L35.4,15.5" stroke-linejoin="round"/>
<path d="M60.3,4 H73.8 M61.7,4 L62.8,16.1 Q62.9,16.8 63.6,16.8 H71.4 Q72.1,16.8 72.2,16.1 L73.3,4 M64.8,4 V2.1 Q64.8,1 65.9,1 H69.1 Q70.2,1 70.2,2.1 V4" stroke-linejoin="round"/>
</svg>
<div class="t" style="left:-41.0px;width:200px;text-align:center;top:852.62px;font-size:14px;color:#111">2018</div>
<div class="t" style="left:64.0px;width:200px;text-align:center;top:852.62px;font-size:14px;color:#111">5</div>
<div class="t" style="left:168.0px;width:200px;text-align:center;top:852.62px;font-size:14px;color:#111">1</div>
<div class="t" style="left:1204.6px;width:200px;text-align:center;top:852.62px;font-size:14px;color:#111">N</div>
<div class="t" style="left:1307.9px;width:200px;text-align:center;top:852.62px;font-size:14px;color:#111">Y</div>
<svg class="a" style="left:1494.0px;top:851.3px" width="80" height="18" viewBox="0 0 80 18" fill="none" stroke="#111" stroke-width="1.5">
<circle cx="7" cy="7" r="5.8"/><path d="M11.2,11.2 L16.3,16.3" stroke-width="1.7"/>
<path d="M30.5,16.5 L31.5,11.6 L41.5,1.6 L45.4,5.5 L35.4,15.5 Z M39.3,3.8 L43.2,7.7 M31.5,11.6 L35.4,15.5" stroke-linejoin="round"/>
<path d="M60.3,4 H73.8 M61.7,4 L62.8,16.1 Q62.9,16.8 63.6,16.8 H71.4 Q72.1,16.8 72.2,16.1 L73.3,4 M64.8,4 V2.1 Q64.8,1 65.9,1 H69.1 Q70.2,1 70.2,2.1 V4" stroke-linejoin="round"/>
</svg>
<div class="a" style="left:0.0px;top:868.5px;width:1604.0px;height:12.0px;background:#fff"></div>
<div class="a" style="left:6.4px;top:867.8px;width:1597.8px;height:1.0px;background:#dedede"></div>
<div class="a" style="left:1607.7px;top:299.6px;width:7.0px;height:280.0px;background:#8f8f8f;border-radius:3.5px"></div>
<svg class="a" style="left:1606px;top:282px" width="10" height="8" viewBox="0 0 10 8"><path d="M5.5,1 L9.5,7 H1.5 Z" fill="#8f8f8f"/></svg>
<svg class="a" style="left:1606px;top:849px" width="10" height="8" viewBox="0 0 10 8"><path d="M5.5,7 L9.5,1 H1.5 Z" fill="#8f8f8f"/></svg>
<div class="ov"></div>
</div>
<div id="sb"></div>
<svg class="a" style="left:1899px;top:60px" width="13" height="12" viewBox="0 0 13 12"><path d="M6.5,1.5 L12,9.5 H1 Z" fill="#8f8f8f" stroke="#8f8f8f" stroke-width="1.5" stroke-linejoin="round"/></svg>
<div class="a" style="left:1900px;top:80px;width:11px;height:712px;background:#8f8f8f;border-radius:6px"></div>
<svg class="a" style="left:1899px;top:906px" width="13" height="12" viewBox="0 0 13 12"><path d="M6.5,10.5 L12,2.5 H1 Z" fill="#8f8f8f" stroke="#8f8f8f" stroke-width="1.5" stroke-linejoin="round"/></svg>
<!-- MODAL -->
<div class="a" style="left:672px;top:62px;width:839px;height:900px;background:#fff;border:1px solid #111;border-radius:6px;overflow:hidden"><div class="a" style="left:0;top:0;width:837px;height:44px;background:#0862b4;border-bottom:1px solid #0a3d6e"></div></div>
<div class="t" style="left:686.5px;top:77.16px;font-size:16px;color:#fff;letter-spacing:-0.15px">Result Period</div>
<svg class="a" style="left:686.5px;top:122.1px" width="12" height="12" viewBox="0 0 12 12"><path d="M6,0.3 V11.3" stroke="#e07a86" stroke-width="1.2"/><path d="M1.1,3 L10.9,8.6 M1.1,8.6 L10.9,3" stroke="#d63a4a" stroke-width="1.3"/></svg>
<div class="t" style="left:700.3px;top:125.37px;font-size:15.75px;color:#3a3a3a">Year</div>
<svg class="a" style="left:686.5px;top:163.20000000000002px" width="12" height="12" viewBox="0 0 12 12"><path d="M6,0.3 V11.3" stroke="#e07a86" stroke-width="1.2"/><path d="M1.1,3 L10.9,8.6 M1.1,8.6 L10.9,3" stroke="#d63a4a" stroke-width="1.3"/></svg>
<div class="t" style="left:700.3px;top:166.47px;font-size:15.75px;color:#3a3a3a">Period</div>
<svg class="a" style="left:686.5px;top:204.8px" width="12" height="12" viewBox="0 0 12 12"><path d="M6,0.3 V11.3" stroke="#e07a86" stroke-width="1.2"/><path d="M1.1,3 L10.9,8.6 M1.1,8.6 L10.9,3" stroke="#d63a4a" stroke-width="1.3"/></svg>
<div class="t" style="left:700.3px;top:208.07px;font-size:15.75px;color:#3a3a3a">Semester</div>
<div class="t" style="left:686.6px;top:250.27px;font-size:15.75px;color:#3a3a3a">Default Indicator</div>
<div class="t" style="left:686.6px;top:290.97px;font-size:15.75px;color:#3a3a3a">Description</div>
<div class="t" style="left:686.6px;top:333.57px;font-size:15.75px;color:#3a3a3a">Result Flag</div>
<div class="t" style="left:686.6px;top:375.17px;font-size:15.75px;color:#3a3a3a">Comment Flag</div>
<div class="t" style="left:686.6px;top:417.97px;font-size:15.75px;color:#3a3a3a">Teacher Edit Comments</div>
<div class="t" style="left:686.6px;top:460.17px;font-size:15.75px;color:#3a3a3a">Restricted User Edit Comments</div>
<div class="t" style="left:686.6px;top:502.67px;font-size:15.75px;color:#3a3a3a">Unrestricted User Edit Comments</div>
<div class="t" style="left:686.6px;top:545.47px;font-size:15.75px;color:#3a3a3a">User Personal Comment Bank</div>
<svg class="a" style="left:686.5px;top:584.6999999999999px" width="12" height="12" viewBox="0 0 12 12"><path d="M6,0.3 V11.3" stroke="#e07a86" stroke-width="1.2"/><path d="M1.1,3 L10.9,8.6 M1.1,8.6 L10.9,3" stroke="#d63a4a" stroke-width="1.3"/></svg>
<div class="t" style="left:700.3px;top:587.97px;font-size:15.75px;color:#3a3a3a">Report Type</div>
<svg class="a" style="left:686.5px;top:626.0px" width="12" height="12" viewBox="0 0 12 12"><path d="M6,0.3 V11.3" stroke="#e07a86" stroke-width="1.2"/><path d="M1.1,3 L10.9,8.6 M1.1,8.6 L10.9,3" stroke="#d63a4a" stroke-width="1.3"/></svg>
<div class="t" style="left:700.3px;top:629.27px;font-size:15.75px;color:#3a3a3a">IA Lock</div>
<div class="t" style="left:686.6px;top:671.07px;font-size:15.75px;color:#3a3a3a">Allow Draft Academic Reports in Teacher Kiosk</div>
<div class="t" style="left:686.6px;top:714.27px;font-size:15.75px;color:#3a3a3a">Archived</div>
<svg class="a" style="left:1075.5px;top:248.1px" width="19" height="19" viewBox="0 0 19 19" fill="none" stroke="#50b55c" stroke-width="1.9">
<circle cx="9.5" cy="9.5" r="7.9"/><path d="M6.9,7.4 C6.9,4.3 12.1,4.3 12.1,7.4 C12.1,9.3 9.5,9.4 9.5,11.1" stroke-linecap="round" stroke-width="2.2"/><circle cx="9.5" cy="13.9" r="1.35" fill="#50b55c" stroke="none"/></svg>
<svg class="a" style="left:1075.5px;top:416.6px" width="19" height="19" viewBox="0 0 19 19" fill="none" stroke="#50b55c" stroke-width="1.9">
<circle cx="9.5" cy="9.5" r="7.9"/><path d="M6.9,7.4 C6.9,4.3 12.1,4.3 12.1,7.4 C12.1,9.3 9.5,9.4 9.5,11.1" stroke-linecap="round" stroke-width="2.2"/><circle cx="9.5" cy="13.9" r="1.35" fill="#50b55c" stroke="none"/></svg>
<svg class="a" style="left:1075.5px;top:459.1px" width="19" height="19" viewBox="0 0 19 19" fill="none" stroke="#50b55c" stroke-width="1.9">
<circle cx="9.5" cy="9.5" r="7.9"/><path d="M6.9,7.4 C6.9,4.3 12.1,4.3 12.1,7.4 C12.1,9.3 9.5,9.4 9.5,11.1" stroke-linecap="round" stroke-width="2.2"/><circle cx="9.5" cy="13.9" r="1.35" fill="#50b55c" stroke="none"/></svg>
<svg class="a" style="left:1075.5px;top:501.6px" width="19" height="19" viewBox="0 0 19 19" fill="none" stroke="#50b55c" stroke-width="1.9">
<circle cx="9.5" cy="9.5" r="7.9"/><path d="M6.9,7.4 C6.9,4.3 12.1,4.3 12.1,7.4 C12.1,9.3 9.5,9.4 9.5,11.1" stroke-linecap="round" stroke-width="2.2"/><circle cx="9.5" cy="13.9" r="1.35" fill="#50b55c" stroke="none"/></svg>
<svg class="a" style="left:1075.5px;top:544.1px" width="19" height="19" viewBox="0 0 19 19" fill="none" stroke="#50b55c" stroke-width="1.9">
<circle cx="9.5" cy="9.5" r="7.9"/><path d="M6.9,7.4 C6.9,4.3 12.1,4.3 12.1,7.4 C12.1,9.3 9.5,9.4 9.5,11.1" stroke-linecap="round" stroke-width="2.2"/><circle cx="9.5" cy="13.9" r="1.35" fill="#50b55c" stroke="none"/></svg>
<svg class="a" style="left:1075.5px;top:668.6px" width="19" height="19" viewBox="0 0 19 19" fill="none" stroke="#50b55c" stroke-width="1.9">
<circle cx="9.5" cy="9.5" r="7.9"/><path d="M6.9,7.4 C6.9,4.3 12.1,4.3 12.1,7.4 C12.1,9.3 9.5,9.4 9.5,11.1" stroke-linecap="round" stroke-width="2.2"/><circle cx="9.5" cy="13.9" r="1.35" fill="#50b55c" stroke="none"/></svg>
<svg class="a" style="left:1075.5px;top:711.6px" width="19" height="19" viewBox="0 0 19 19" fill="none" stroke="#50b55c" stroke-width="1.9">
<circle cx="9.5" cy="9.5" r="7.9"/><path d="M6.9,7.4 C6.9,4.3 12.1,4.3 12.1,7.4 C12.1,9.3 9.5,9.4 9.5,11.1" stroke-linecap="round" stroke-width="2.2"/><circle cx="9.5" cy="13.9" r="1.35" fill="#50b55c" stroke="none"/></svg>
<div class="a" style="left:1103.0px;top:116.0px;width:90.0px;height:34.0px;border:1px solid #c8c8c8;border-radius:4px;background:#eee"></div>
<div class="t" style="left:1103px;width:82px;text-align:right;top:124.67px;font-size:15.75px;color:#555">2025</div>
<div class="a" style="left:1103.0px;top:158.0px;width:90.0px;height:33.0px;border:1px solid #c8c8c8;border-radius:4px;background:#eee"></div>
<div class="t" style="left:1111.0px;top:166.67px;font-size:15.75px;color:#555">22</div>
<div class="a" style="left:1103.0px;top:199.0px;width:90.0px;height:33.0px;border:1px solid #c8c8c8;border-radius:4px;background:#fff"></div>
<div class="t" style="left:1111.0px;top:207.07px;font-size:15.75px;color:#555">1</div>
<div class="a" style="left:1103.0px;top:241.0px;width:90.0px;height:33.0px;border:1px solid #c8c8c8;border-radius:4px;background:#fff"></div>
<svg class="a" style="left:1178px;top:255px" width="10" height="7" viewBox="0 0 10 7"><path d="M1,1.2 L5,5.3 L9,1.2" fill="none" stroke="#111" stroke-width="2"/></svg>
<div class="a" style="left:1103.0px;top:283.0px;width:360.0px;height:32.0px;border:1px solid #c8c8c8;border-radius:4px;background:#fff"></div>
<div class="t" style="left:1111.0px;top:290.77px;font-size:15.75px;color:#555">Semester One, 2025</div>
<svg class="a" style="left:1104.5px;top:333.9px" width="15" height="15" viewBox="0 0 15 15"><rect x="0.5" y="0.5" width="14" height="14" rx="2.2" fill="#767676"/><path d="M3.2,7.8 L6.2,11 L11.9,3.4" fill="none" stroke="#fff" stroke-width="2.1"/></svg>
<svg class="a" style="left:1104.5px;top:376.2px" width="15" height="15" viewBox="0 0 15 15"><rect x="0.5" y="0.5" width="14" height="14" rx="2.2" fill="#767676"/><path d="M3.2,7.8 L6.2,11 L11.9,3.4" fill="none" stroke="#fff" stroke-width="2.1"/></svg>
<svg class="a" style="left:1104.5px;top:419.0px" width="15" height="15" viewBox="0 0 15 15"><rect x="0.5" y="0.5" width="14" height="14" rx="2.2" fill="#767676"/><path d="M3.2,7.8 L6.2,11 L11.9,3.4" fill="none" stroke="#fff" stroke-width="2.1"/></svg>
<svg class="a" style="left:1104.5px;top:461.2px" width="15" height="15" viewBox="0 0 15 15"><rect x="0.5" y="0.5" width="14" height="14" rx="2.2" fill="#767676"/><path d="M3.2,7.8 L6.2,11 L11.9,3.4" fill="none" stroke="#fff" stroke-width="2.1"/></svg>
<svg class="a" style="left:1104.5px;top:503.9px" width="15" height="15" viewBox="0 0 15 15"><rect x="0.5" y="0.5" width="14" height="14" rx="2.2" fill="#767676"/><path d="M3.2,7.8 L6.2,11 L11.9,3.4" fill="none" stroke="#fff" stroke-width="2.1"/></svg>
<svg class="a" style="left:1104.5px;top:546.4px" width="15" height="15" viewBox="0 0 15 15"><rect x="0.5" y="0.5" width="14" height="14" rx="2.2" fill="#767676"/><path d="M3.2,7.8 L6.2,11 L11.9,3.4" fill="none" stroke="#fff" stroke-width="2.1"/></svg>
<div class="a" style="left:1103.0px;top:579.0px;width:360.0px;height:34.0px;border:1px solid #c8c8c8;border-radius:4px;background:#fff"></div>
<div class="t" style="left:1111.2px;top:588.37px;font-size:15.75px;color:#555">B - Semester</div>
<svg class="a" style="left:1447.5px;top:592.5px" width="10" height="7" viewBox="0 0 10 7"><path d="M1,1.2 L5,5.3 L9,1.2" fill="none" stroke="#111" stroke-width="2"/></svg>
<div class="a" style="left:1103.0px;top:621.0px;width:270.0px;height:34.0px;border:1px solid #66afe9;border-radius:4px;background:#fff;box-shadow:0 0 0 2.5px rgba(102,175,233,.55)"></div>
<div class="t" style="left:1111.2px;top:629.57px;font-size:15.75px;color:#555;width:243px;overflow:hidden">Staff Kiosk View, Student Cafe, Parent Lounge Only</div>
<svg class="a" style="left:1358px;top:634px" width="10" height="7" viewBox="0 0 10 7"><path d="M1,1.2 L5,5.3 L9,1.2" fill="none" stroke="#111" stroke-width="2"/></svg>
<div class="a" style="left:673px;top:63px;width:837px;height:870px;overflow:hidden"><div class="a" style="left:431px;top:598px;width:413px;height:181px;border-radius:5px;box-shadow:0 26px 50px rgba(0,0,0,.34)"></div></div>
<div class="t" style="left:1105.0px;top:837.67px;font-size:15.75px;color:#333">system for critical functions including: Progressive</div>
<div class="t" style="left:1105.0px;top:859.97px;font-size:15.75px;color:#333">Assessment, Analytic Dashboards and Reports. It can</div>
<div class="t" style="left:1105.0px;top:882.27px;font-size:15.75px;color:#333">also facilitate the regeneration of a student's academic</div>
<div class="t" style="left:1105.0px;top:904.57px;font-size:15.75px;color:#333">report.</div>
<div class="a" style="left:1104.0px;top:661.0px;width:413.0px;height:181.0px;background:#fff;border:1px solid #b5b5b5;border-left-color:#555;border-right:0;border-radius:5px;box-shadow:0 3px 8px rgba(0,0,0,.18),1px 1px 3px rgba(0,0,0,.2);overflow:hidden"></div>
<div class="a" style="left:1105.0px;top:781.0px;width:412.0px;height:30.0px;background:#767676"></div>
<div class="t" style="left:1112.3px;top:667.66px;font-size:16px;color:#444">Teacher Class Access</div>
<div class="t" style="left:1112.3px;top:697.69px;font-size:16px;color:#444">Teacher Class Access (Disable Progressive Assessment)</div>
<div class="t" style="left:1112.3px;top:727.72px;font-size:16px;color:#444">Restricted Supervisor Access</div>
<div class="t" style="left:1112.3px;top:757.75px;font-size:16px;color:#444">Unrestricted Supervisor Access</div>
<div class="t" style="left:1112.3px;top:787.78px;font-size:16px;color:#fff">Staff Kiosk View Only</div>
<div class="t" style="left:1112.3px;top:817.81px;font-size:16px;color:#444">Staff Kiosk View, Student Cafe, Parent Lounge Only</div>
<svg class="a" style="left:1030px;top:755px" width="560" height="120" viewBox="1030 755 560 120">
<defs><filter id="sh" x="-10%" y="-50%" width="120%" height="200%"><feGaussianBlur stdDeviation="2.2"/></filter></defs>
<ellipse cx="1305.5" cy="813.5" rx="254" ry="39.5" fill="none" stroke="rgba(0,0,0,.45)" stroke-width="4" filter="url(#sh)"/>
<ellipse cx="1305" cy="810.8" rx="254.3" ry="39.2" fill="none" stroke="#4fb846" stroke-width="4.2"/>
</svg>
<svg class="a" style="left:1490px;top:798px" width="14" height="20" viewBox="0 0 14 20">
<path d="M1.4,2 L11.9,12.3 H7.6 L10.3,17.2 L8.5,18 L5.7,13.2 L1.4,15.8 Z" fill="#000" stroke="rgba(255,255,255,.55)" stroke-width="0.6" stroke-linejoin="round"/></svg>
</body></html>
